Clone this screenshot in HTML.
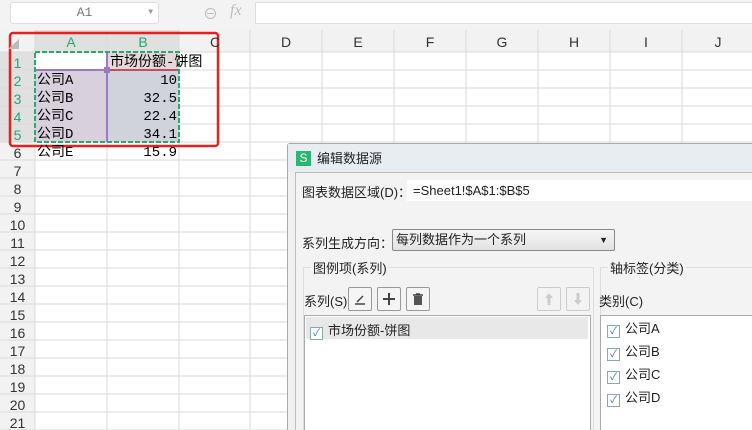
<!DOCTYPE html><html><head><meta charset="utf-8"><style>
html,body{margin:0;width:752px;height:430px;overflow:hidden}
body{background:#fff;font-family:"Liberation Sans","Noto Sans CJK SC",sans-serif;position:relative}
.a{position:absolute}
.cj{font-family:"Liberation Mono","Noto Sans CJK SC",monospace;font-size:14px}
.ck{display:inline-block;width:11px;height:11px;border:1px solid #8aa;color:#3a6fb0;font-size:10px;line-height:11px;text-align:center;margin-right:5px;vertical-align:-1px;background:#fff}
</style></head><body>
<div class="a" style="left:0;top:0;width:752px;height:30px;background:#f3f3f3"></div>
<div class="a" style="left:10px;top:2px;width:147px;height:20px;background:#fff;border:1px solid #ddd;border-radius:3px;font-size:13px;color:#777;text-align:center;line-height:20px;font-family:'Liberation Mono',monospace">A1<span style="position:absolute;right:5px;font-size:8px;color:#999">▼</span></div>
<div class="a" style="left:203px;top:3px;font-size:15px;color:#bbb">⊖</div>
<div class="a" style="left:230px;top:2px;font-size:16px;color:#bbb;font-style:italic;font-family:'Liberation Serif',serif">fx</div>
<div class="a" style="left:255px;top:2px;width:497px;height:20px;background:#fff;border:1px solid #ddd"></div>
<svg class="a" style="left:0;top:30px" width="752" height="400">
<rect x="0" y="0" width="752" height="22" fill="#f2f2f2"/>
<rect x="0" y="0" width="35" height="400" fill="#f2f2f2"/>
<rect x="35" y="0" width="144" height="22" fill="#e0e0e0"/>
<rect x="0" y="22" width="35" height="90" fill="#e0e0e0"/>
<g stroke="#dadada">
<line x1="35" y1="0" x2="35" y2="400"/>
<line x1="107" y1="0" x2="107" y2="400"/><line x1="179" y1="0" x2="179" y2="400"/><line x1="250" y1="0" x2="250" y2="400"/><line x1="322" y1="0" x2="322" y2="400"/><line x1="394" y1="0" x2="394" y2="400"/><line x1="466" y1="0" x2="466" y2="400"/><line x1="538" y1="0" x2="538" y2="400"/><line x1="610" y1="0" x2="610" y2="400"/><line x1="682" y1="0" x2="682" y2="400"/>
</g>
<g stroke="#dadada" id="h"></g>
<rect x="35" y="40" width="72" height="72" fill="#d8d0dc"/>
<rect x="107" y="40" width="72" height="72" fill="#d0d2dc"/>
<rect x="107" y="22" width="72" height="18" fill="#e6d8da"/>
<line x1="35" y1="40" x2="107" y2="40" stroke="#9b7bc0" stroke-width="2"/>
<line x1="107" y1="40" x2="179" y2="40" stroke="#c05060" stroke-width="2"/>
<line x1="107" y1="22" x2="107" y2="112" stroke="#9b7bc0" stroke-width="2"/>
<rect x="104" y="37" width="6" height="6" fill="#9b7bc0"/>
<rect x="35" y="22" width="144" height="90" fill="none" stroke="#2aa870" stroke-width="2" stroke-dasharray="5,2"/>
<rect x="10" y="3" width="208" height="113" fill="none" stroke="#e62020" stroke-width="2.5" rx="3"/>
<path d="M8 19 L19 9 L19 19Z" fill="#bbb"/>
</svg>
<div class="a" id="grid"></div>
<script>
var s='',g=document.getElementById('h');
for(var i=0;i<=21;i++){var y=52+i*18;s+='<line x1="0" y1="'+(y-30)+'" x2="752" y2="'+(y-30)+'"/>';}
g.innerHTML=s;
var cols=['A','B','C','D','E','F','G','H','I','J'],x=[35,107,179,250,322,394,466,538,610,682],o='';
for(var i=0;i<10;i++){o+='<div class="a" style="left:'+x[i]+'px;top:34px;width:72px;text-align:center;font-size:14px;color:'+(i<2?'#22a870':'#333')+'">'+cols[i]+'</div>';}
for(var r=1;r<=21;r++){o+='<div class="a" style="left:0;top:'+(54+(r-1)*18)+'px;width:35px;text-align:center;font-size:14px;line-height:18px;color:'+(r<=5?'#22a870':'#333')+'">'+r+'</div>';}
document.getElementById('grid').innerHTML=o;
</script>
<div class="a cj" style="left:110px;top:54px;line-height:18px">市场份额-饼图</div>
<div class="a cj" style="left:37px;top:72px;line-height:18px">公司A<br>公司B<br>公司C<br>公司D<br>公司E</div>
<div class="a cj" style="left:107px;top:72px;width:70px;text-align:right;line-height:18px">10<br>32.5<br>22.4<br>34.1<br>15.9</div>
<div class="a" style="left:287px;top:143px;width:470px;height:290px;background:#f0f0f0;border:1px solid #aaa;border-radius:3px"></div>
<div class="a" style="left:288px;top:144px;width:464px;height:28px;background:#e8edf2"></div>
<div class="a" style="left:296px;top:151px;width:15px;height:15px;background:#2bb573;color:#fff;font-size:12px;text-align:center;line-height:15px">S</div>
<div class="a" style="left:317px;top:148px;font-size:13px;color:#222">编辑数据源</div>
<div class="a" style="left:295px;top:172px;width:460px;height:260px;border:1px solid #bbb;background:#f3f3f3"></div>
<div class="a" style="left:302px;top:182px;font-size:13px;color:#222">图表数据区域(D)：</div>
<div class="a" style="left:407px;top:180px;width:345px;height:21px;background:#fff;font-size:13px;line-height:21px;padding-left:6px;color:#222">=Sheet1!$A$1:$B$5</div>
<div class="a" style="left:302px;top:233px;font-size:13px;color:#222">系列生成方向：</div>
<div class="a" style="left:392px;top:229px;width:218px;height:20px;border:1px solid #888;border-radius:2px;background:linear-gradient(#f5f5f5,#e2e2e2);font-size:13px;line-height:20px;padding-left:3px;color:#222">每列数据作为一个系列<span style="position:absolute;right:6px;font-size:9px">▼</span></div>
<div class="a" style="left:303px;top:267px;width:289px;height:170px;border:1px solid #ddd"></div>
<div class="a" style="left:311px;top:258px;font-size:13px;background:#f3f3f3;color:#222;padding:0 2px">图例项(系列)</div>
<div class="a" style="left:600px;top:267px;width:160px;height:170px;border:1px solid #ddd"></div>
<div class="a" style="left:608px;top:258px;font-size:13px;background:#f3f3f3;color:#222;padding:0 2px">轴标签(分类)</div>
<div class="a" style="left:304px;top:291px;font-size:13px;color:#222">系列(S)</div>
<div class="a" style="left:348px;top:287px;width:22px;height:22px;border:1px solid #999;border-radius:2px;background:#f5f5f5"><svg width="22" height="22"><path d="M6 16H16M8 14L14 8" stroke="#444" stroke-width="1.5"/></svg></div>
<div class="a" style="left:377px;top:287px;width:22px;height:22px;border:1px solid #999;border-radius:2px;background:#f5f5f5"><svg width="22" height="22"><path d="M11 5V17M5 11H17" stroke="#444" stroke-width="2"/></svg></div>
<div class="a" style="left:406px;top:287px;width:22px;height:22px;border:1px solid #999;border-radius:2px;background:#f5f5f5"><svg width="22" height="22"><path d="M6 7H16M9 6H13" stroke="#444" stroke-width="1.5"/><rect x="7" y="8" width="8" height="9" fill="#555"/></svg></div>
<div class="a" style="left:537px;top:287px;width:22px;height:22px;border:1px solid #ccc;border-radius:2px"><svg width="22" height="22"><path d="M11 5L7 10H9.5V17H12.5V10H15Z" fill="#ccc"/></svg></div>
<div class="a" style="left:566px;top:287px;width:22px;height:22px;border:1px solid #ccc;border-radius:2px"><svg width="22" height="22"><path d="M11 17L7 12H9.5V5H12.5V12H15Z" fill="#ccc"/></svg></div>
<div class="a" style="left:599px;top:291px;font-size:13px;color:#222">类别(C)</div>
<div class="a" style="left:304px;top:315px;width:285px;height:120px;background:#fff;border:1px solid #aaa"></div>
<div class="a" style="left:306px;top:317px;width:282px;height:22px;background:#e8e8e8"></div>
<div class="a" style="left:600px;top:315px;width:160px;height:120px;background:#fff;border:1px solid #aaa"></div>
<div class="a" style="left:310px;top:320px;font-size:13px;color:#222"><span class="ck">✓</span>市场份额-饼图</div>
<div class="a" style="left:607px;top:317px;font-size:13px;color:#222;line-height:23px">
<div><span class="ck">✓</span>公司A</div>
<div><span class="ck">✓</span>公司B</div>
<div><span class="ck">✓</span>公司C</div>
<div><span class="ck">✓</span>公司D</div>
</div>
</body></html>
